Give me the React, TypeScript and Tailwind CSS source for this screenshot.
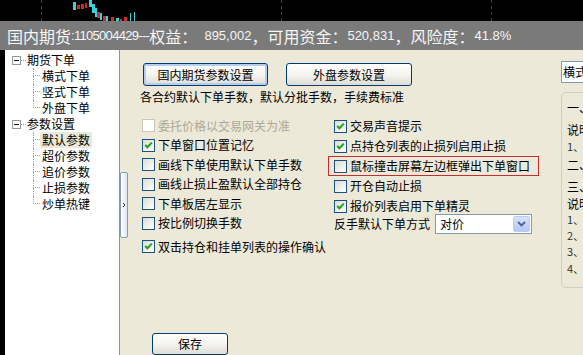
import React from 'react';

const candles: { x: number; y: number; w: number; h: number; c: string }[] = [
  { x: 73, y: 2, w: 3, h: 8, c: '#39d0e0' },
  { x: 77, y: 5, w: 3, h: 4, c: '#d12a2a' },
  { x: 81, y: 4, w: 3, h: 5, c: '#d12a2a' },
  { x: 85, y: 3, w: 2, h: 5, c: '#d12a2a' },
  { x: 89, y: 0, w: 3, h: 7, c: '#39d0e0' },
  { x: 92, y: 4, w: 3, h: 9, c: '#39d0e0' },
  { x: 95, y: 8, w: 2, h: 9, c: '#39d0e0' },
  { x: 97, y: 12, w: 3, h: 6, c: '#d12a2a' },
  { x: 100, y: 13, w: 2, h: 7, c: '#39d0e0' },
  { x: 103, y: 16, w: 3, h: 5, c: '#d12a2a' },
  { x: 106, y: 16, w: 2, h: 5, c: '#39d0e0' },
  { x: 111, y: 17, w: 3, h: 4, c: '#d12a2a' },
  { x: 116, y: 18, w: 3, h: 3, c: '#39d0e0' },
  { x: 120, y: 19, w: 2, h: 2, c: '#d12a2a' },
  { x: 124, y: 17, w: 3, h: 4, c: '#d12a2a' },
  { x: 130, y: 13, w: 1, h: 8, c: '#39d0e0' },
  { x: 134, y: 12, w: 1, h: 9, c: '#39d0e0' },
];

function ChartStrip() {
  return (
    <svg width="583" height="21" className="block shrink-0">
      <rect width="583" height="21" fill="#000" />
      {[41, 281, 491].map((x) => (
        <line key={x} x1={x + 0.5} y1="0" x2={x + 0.5} y2="21" stroke="#9a1c1c" strokeDasharray="3 3" />
      ))}
      {candles.map((k, i) => (
        <rect key={i} x={k.x} y={k.y} width={k.w} height={k.h} fill={k.c} />
      ))}
    </svg>
  );
}

function Num({ children }: { children: React.ReactNode }) {
  return <span className="font-['Liberation_Sans',sans-serif] text-[13px]">{children}</span>;
}

function TitleBar() {
  return (
    <div className="h-[29px] shrink-0 bg-[#7a7a7a] pl-[7px] flex items-center text-[16px] text-[#f6f6f6] whitespace-nowrap">
      国内期货
      <span className="font-['Liberation_Sans',sans-serif] text-[13px] tracking-[-0.7px]">:1105004429---</span>
      权益：<Num>&nbsp;&nbsp;895,002</Num>，可用资金：<Num>520,831</Num>，风险度：<Num>41.8%</Num>
    </div>
  );
}

function MinusBox() {
  return (
    <div className="w-[9px] h-[9px] border border-[#919b9c] bg-white flex items-center justify-center">
      <div className="w-[5px] h-px bg-black" />
    </div>
  );
}

function TreeRoot({ label }: { label: string }) {
  return (
    <div className="h-[16px] flex items-center pl-[7px]">
      <MinusBox />
      <div className="w-[5px] border-t border-dotted border-[#a0a0a0]" />
      <span className="ml-px leading-[16px]">{label}</span>
    </div>
  );
}

function TreeChild({ label, last, active }: { label: string; last?: boolean; active?: boolean }) {
  return (
    <div className="h-[16px] flex">
      <div className="w-[28px] shrink-0" />
      <div className="w-[7px] shrink-0 flex flex-col">
        <div className="h-[8px] border-l border-b border-dotted border-[#a0a0a0]" />
        <div className={last ? 'h-[8px]' : 'h-[8px] border-l border-dotted border-[#a0a0a0]'} />
      </div>
      <span className={active ? 'px-[2px] leading-[16px] bg-[#ece9d8]' : 'px-[2px] leading-[16px]'}>{label}</span>
    </div>
  );
}

function TreePanel() {
  return (
    <div className="w-[115px] shrink-0 bg-white border-r border-[#8a93a0] pt-[2px]">
      <TreeRoot label="期货下单" />
      <TreeChild label="横式下单" />
      <TreeChild label="竖式下单" />
      <TreeChild label="外盘下单" last />
      <TreeRoot label="参数设置" />
      <TreeChild label="默认参数" active />
      <TreeChild label="超价参数" />
      <TreeChild label="追价参数" />
      <TreeChild label="止损参数" />
      <TreeChild label="炒单热键" last />
    </div>
  );
}

function Splitter() {
  return (
    <div className="w-[8px] shrink-0">
      <div className="mt-[122px] h-[66px] w-[8px] border border-[#7f9db9] rounded-[2px] bg-linear-to-r from-white to-[#dfe6f0] flex items-center justify-center">
        <svg width="4" height="6" viewBox="0 0 4 6">
          <path d="M1 1 L3 3 L1 5" fill="none" stroke="#333" strokeWidth="1" />
        </svg>
      </div>
    </div>
  );
}

function XpButton({ label, w, focus }: { label: string; w: string; focus?: boolean }) {
  return (
    <div
      className={
        focus
          ? `${w} h-[23px] border border-[#003c74] rounded-[3px] bg-linear-to-b from-white via-[#f5f4ef] to-[#dedcd2] shadow-[inset_0_0_0_2px_#b3cdf3] flex items-center justify-center`
          : `${w} h-[23px] border border-[#003c74] rounded-[3px] bg-linear-to-b from-white via-[#f5f4ef] to-[#dedcd2] flex items-center justify-center`
      }
    >
      {label}
    </div>
  );
}

function Check({ checked, disabled }: { checked?: boolean; disabled?: boolean }) {
  return (
    <div
      className={
        disabled
          ? 'w-[13px] h-[13px] shrink-0 border border-[#cac8bb] bg-white'
          : 'w-[13px] h-[13px] shrink-0 border border-[#1c5180] bg-linear-to-br from-[#dcdcd5] to-white flex items-center justify-center'
      }
    >
      {checked && (
        <svg width="11" height="11" viewBox="0 0 11 11">
          <path d="M2.2 5 L4.4 7.3 L8.8 2.6" fill="none" stroke="#21a121" strokeWidth="2" />
        </svg>
      )}
    </div>
  );
}

function LeftRow({ label, checked, disabled }: { label: string; checked?: boolean; disabled?: boolean }) {
  return (
    <div className="h-[19.5px] flex items-center gap-[3px]">
      <Check checked={checked} disabled={disabled} />
      <span className={disabled ? 'text-[#aca899] whitespace-nowrap' : 'whitespace-nowrap'}>{label}</span>
    </div>
  );
}

function RightRow({ label, checked }: { label: string; checked?: boolean }) {
  return (
    <div className="h-[20px] flex items-center gap-[3px]">
      <Check checked={checked} />
      <span className="whitespace-nowrap">{label}</span>
    </div>
  );
}

function Combo() {
  return (
    <div className="w-[97px] h-[20px] border border-[#7f9db9] bg-white flex items-center">
      <span className="flex-1 pl-[4px]">对价</span>
      <div className="w-[17px] h-[16px] mr-px rounded-[2px] border border-[#b9cbf4] bg-linear-to-b from-[#d6e2fd] to-[#b4c8f6] flex items-center justify-center">
        <svg width="9" height="6" viewBox="0 0 9 6">
          <path d="M1 1 L4.5 4.5 L8 1" fill="none" stroke="#4d6185" strokeWidth="1.8" />
        </svg>
      </div>
    </div>
  );
}

function MainPane() {
  return (
    <div className="w-[433px] shrink-0 pt-[13px] pl-[12px] flex flex-col">
      <div className="pl-[3px] flex gap-[18px]">
        <XpButton label="国内期货参数设置" w="w-[125px]" focus />
        <XpButton label="外盘参数设置" w="w-[126px]" />
      </div>
      <div className="mt-[3px] h-[16px] leading-[16px] whitespace-nowrap">各合约默认下单手数，默认分批手数，手续费标准</div>

      <div className="mt-[11px] flex">
        <div className="w-[194px] shrink-0 pl-[2px] flex flex-col">
          <LeftRow label="委托价格以交易网关为准" disabled />
          <LeftRow label="下单窗口位置记忆" checked />
          <LeftRow label="画线下单使用默认下单手数" />
          <LeftRow label="画线止损止盈默认全部持仓" />
          <LeftRow label="下单板居左显示" />
          <LeftRow label="按比例切换手数" />
          <div className="mt-[4px]">
            <LeftRow label="双击持仓和挂单列表的操作确认" checked />
          </div>
        </div>
        <div className="flex flex-col">
          <RightRow label="交易声音提示" checked />
          <RightRow label="点持仓列表的止损列启用止损" checked />
          <div className="h-[20px] w-[211px] -ml-[6px] pl-[5px] border border-[#c62f2f] flex items-center gap-[3px]">
            <Check />
            <span className="whitespace-nowrap">鼠标撞击屏幕左边框弹出下单窗口</span>
          </div>
          <RightRow label="开仓自动止损" />
          <RightRow label="报价列表启用下单精灵" checked />
          <div className="-mt-[2px] h-[20px] flex items-center">
            <span className="w-[101px] whitespace-nowrap">反手默认下单方式</span>
            <Combo />
          </div>
        </div>
      </div>

      <div className="mt-[76px] ml-[12px] w-[76px] h-[24px] border border-[#003c74] rounded-[3px] bg-linear-to-b from-white via-[#f5f4ef] to-[#dedcd2] flex items-center justify-center">
        保存
      </div>
    </div>
  );
}

function RightPane() {
  return (
    <div className="w-[150px] shrink-0 pt-[11px]">
      <div className="h-[22px] border border-[#7f9db9] bg-white pl-px flex items-center whitespace-nowrap">横式下单</div>
      <div className="mt-[9px] h-[196px] border border-[#d0d0bf] rounded-[5px] pl-[5px] whitespace-nowrap leading-[16px]">
        <div className="pt-[7px] h-[23px]">一、横式下单</div>
        <div className="mt-[6px]">说明：默认参数</div>
        <div className="text-[11px] text-[#333]">1、下单手数</div>
        <div className="mt-[3px]">二、分批手数</div>
        <div className="mt-[6px]">三、手续费</div>
        <div className="mt-px">说明：标准</div>
        <div className="-mt-px text-[11px] text-[#333]">1、开仓</div>
        <div className="text-[11px] text-[#333]">2、平仓</div>
        <div className="text-[11px] text-[#333]">3、平今</div>
        <div className="mt-px text-[11px] text-[#333]">4、其他</div>
      </div>
    </div>
  );
}

export default function App() {
  return (
    <div className="w-[583px] h-[355px] overflow-hidden flex flex-col bg-black font-['Noto_Sans_CJK_SC',sans-serif] text-[12px] text-black">
      <ChartStrip />
      <TitleBar />
      <div className="flex flex-1 min-h-0">
        <div className="w-[5px] shrink-0 bg-black" />
        <TreePanel />
        <div className="flex flex-1 min-w-0 bg-[#ece9d8]">
          <Splitter />
          <MainPane />
          <RightPane />
        </div>
      </div>
    </div>
  );
}
